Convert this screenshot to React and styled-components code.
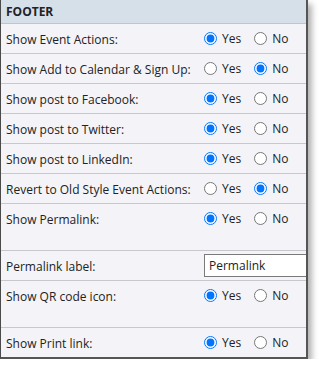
import React, { useState } from 'react';
import styled, { createGlobalStyle } from 'styled-components';

const GlobalStyle = createGlobalStyle`
  body {
    margin: 0;
    background: #fff;
    font-family: "Open Sans", "Liberation Sans", sans-serif;
  }
`;

const Panel = styled.div`
  width: 305px;
  background: #f4f4f8;
  border-left: 1px solid #4a4a4a;
  border-right: 2px solid #555;
  border-bottom: 2px solid #555;
  box-shadow: 4px 4px 6px rgba(0, 0, 0, 0.3);
`;

const Header = styled.div`
  height: 24px;
  display: flex;
  align-items: center;
  padding-left: 5px;
  background: #d6e0e9;
  border-bottom: 1px solid #c4c4c8;
  font-size: 12px;
  font-weight: 700;
  color: #222;
  box-sizing: border-box;
`;

const Row = styled.div`
  display: grid;
  grid-template-columns: 203px 1fr;
  height: ${p => p.$h}px;
  box-sizing: border-box;
  border-bottom: ${p => (p.$last ? 'none' : '1px solid #c8c8cc')};
  font-size: 12px;
  color: #222;
`;

const Label = styled.div`
  padding: 7px 0 0 5px;
  white-space: nowrap;
`;

const Options = styled.div`
  display: flex;
  align-items: flex-start;
  padding-top: 6px;
  gap: 13px;
`;

const Option = styled.label`
  display: flex;
  align-items: center;
  gap: 5px;
  input {
    margin: 0;
    width: 13px;
    height: 13px;
  }
`;

const TextInput = styled.input`
  margin-top: 3px;
  height: 23px;
  width: 100%;
  box-sizing: border-box;
  border: 1px solid #7a7a7a;
  border-right: none;
  padding: 0 4px;
  font: inherit;
  font-size: 12px;
  color: #222;
  background: #fff;
  outline: none;
`;

const settings = [
  { key: 'event', label: 'Show Event Actions:', value: 'yes' },
  { key: 'calendar', label: 'Show Add to Calendar & Sign Up:', value: 'no' },
  { key: 'facebook', label: 'Show post to Facebook:', value: 'yes' },
  { key: 'twitter', label: 'Show post to Twitter:', value: 'yes' },
  { key: 'linkedin', label: 'Show post to LinkedIn:', value: 'yes' },
  { key: 'revert', label: 'Revert to Old Style Event Actions:', value: 'no' },
  { key: 'permalink', label: 'Show Permalink:', value: 'yes', h: 47 },
  { key: 'permalabel', label: 'Permalink label:', input: 'Permalink' },
  { key: 'qr', label: 'Show QR code icon:', value: 'yes', h: 47 },
  { key: 'print', label: 'Show Print link:', value: 'yes', h: 29 },
];

const YesNo = ({ name, value, onChange }) => (
  <Options>
    <Option>
      <input type="radio" name={name} checked={value === 'yes'} onChange={() => onChange('yes')} />
      Yes
    </Option>
    <Option>
      <input type="radio" name={name} checked={value === 'no'} onChange={() => onChange('no')} />
      No
    </Option>
  </Options>
);

const App = () => {
  const [values, setValues] = useState(
    Object.fromEntries(settings.map(s => [s.key, s.value ?? s.input]))
  );
  const update = (key, v) => setValues({ ...values, [key]: v });

  return (
    <>
      <GlobalStyle />
      <Panel>
        <Header>FOOTER</Header>
        {settings.map((s, i) => (
          <Row key={s.key} $h={s.h || 30} $last={i === settings.length - 1}>
            <Label>{s.label}</Label>
            {s.input !== undefined ? (
              <TextInput value={values[s.key]} onChange={e => update(s.key, e.target.value)} />
            ) : (
              <YesNo name={s.key} value={values[s.key]} onChange={v => update(s.key, v)} />
            )}
          </Row>
        ))}
      </Panel>
    </>
  );
};

export default App;
